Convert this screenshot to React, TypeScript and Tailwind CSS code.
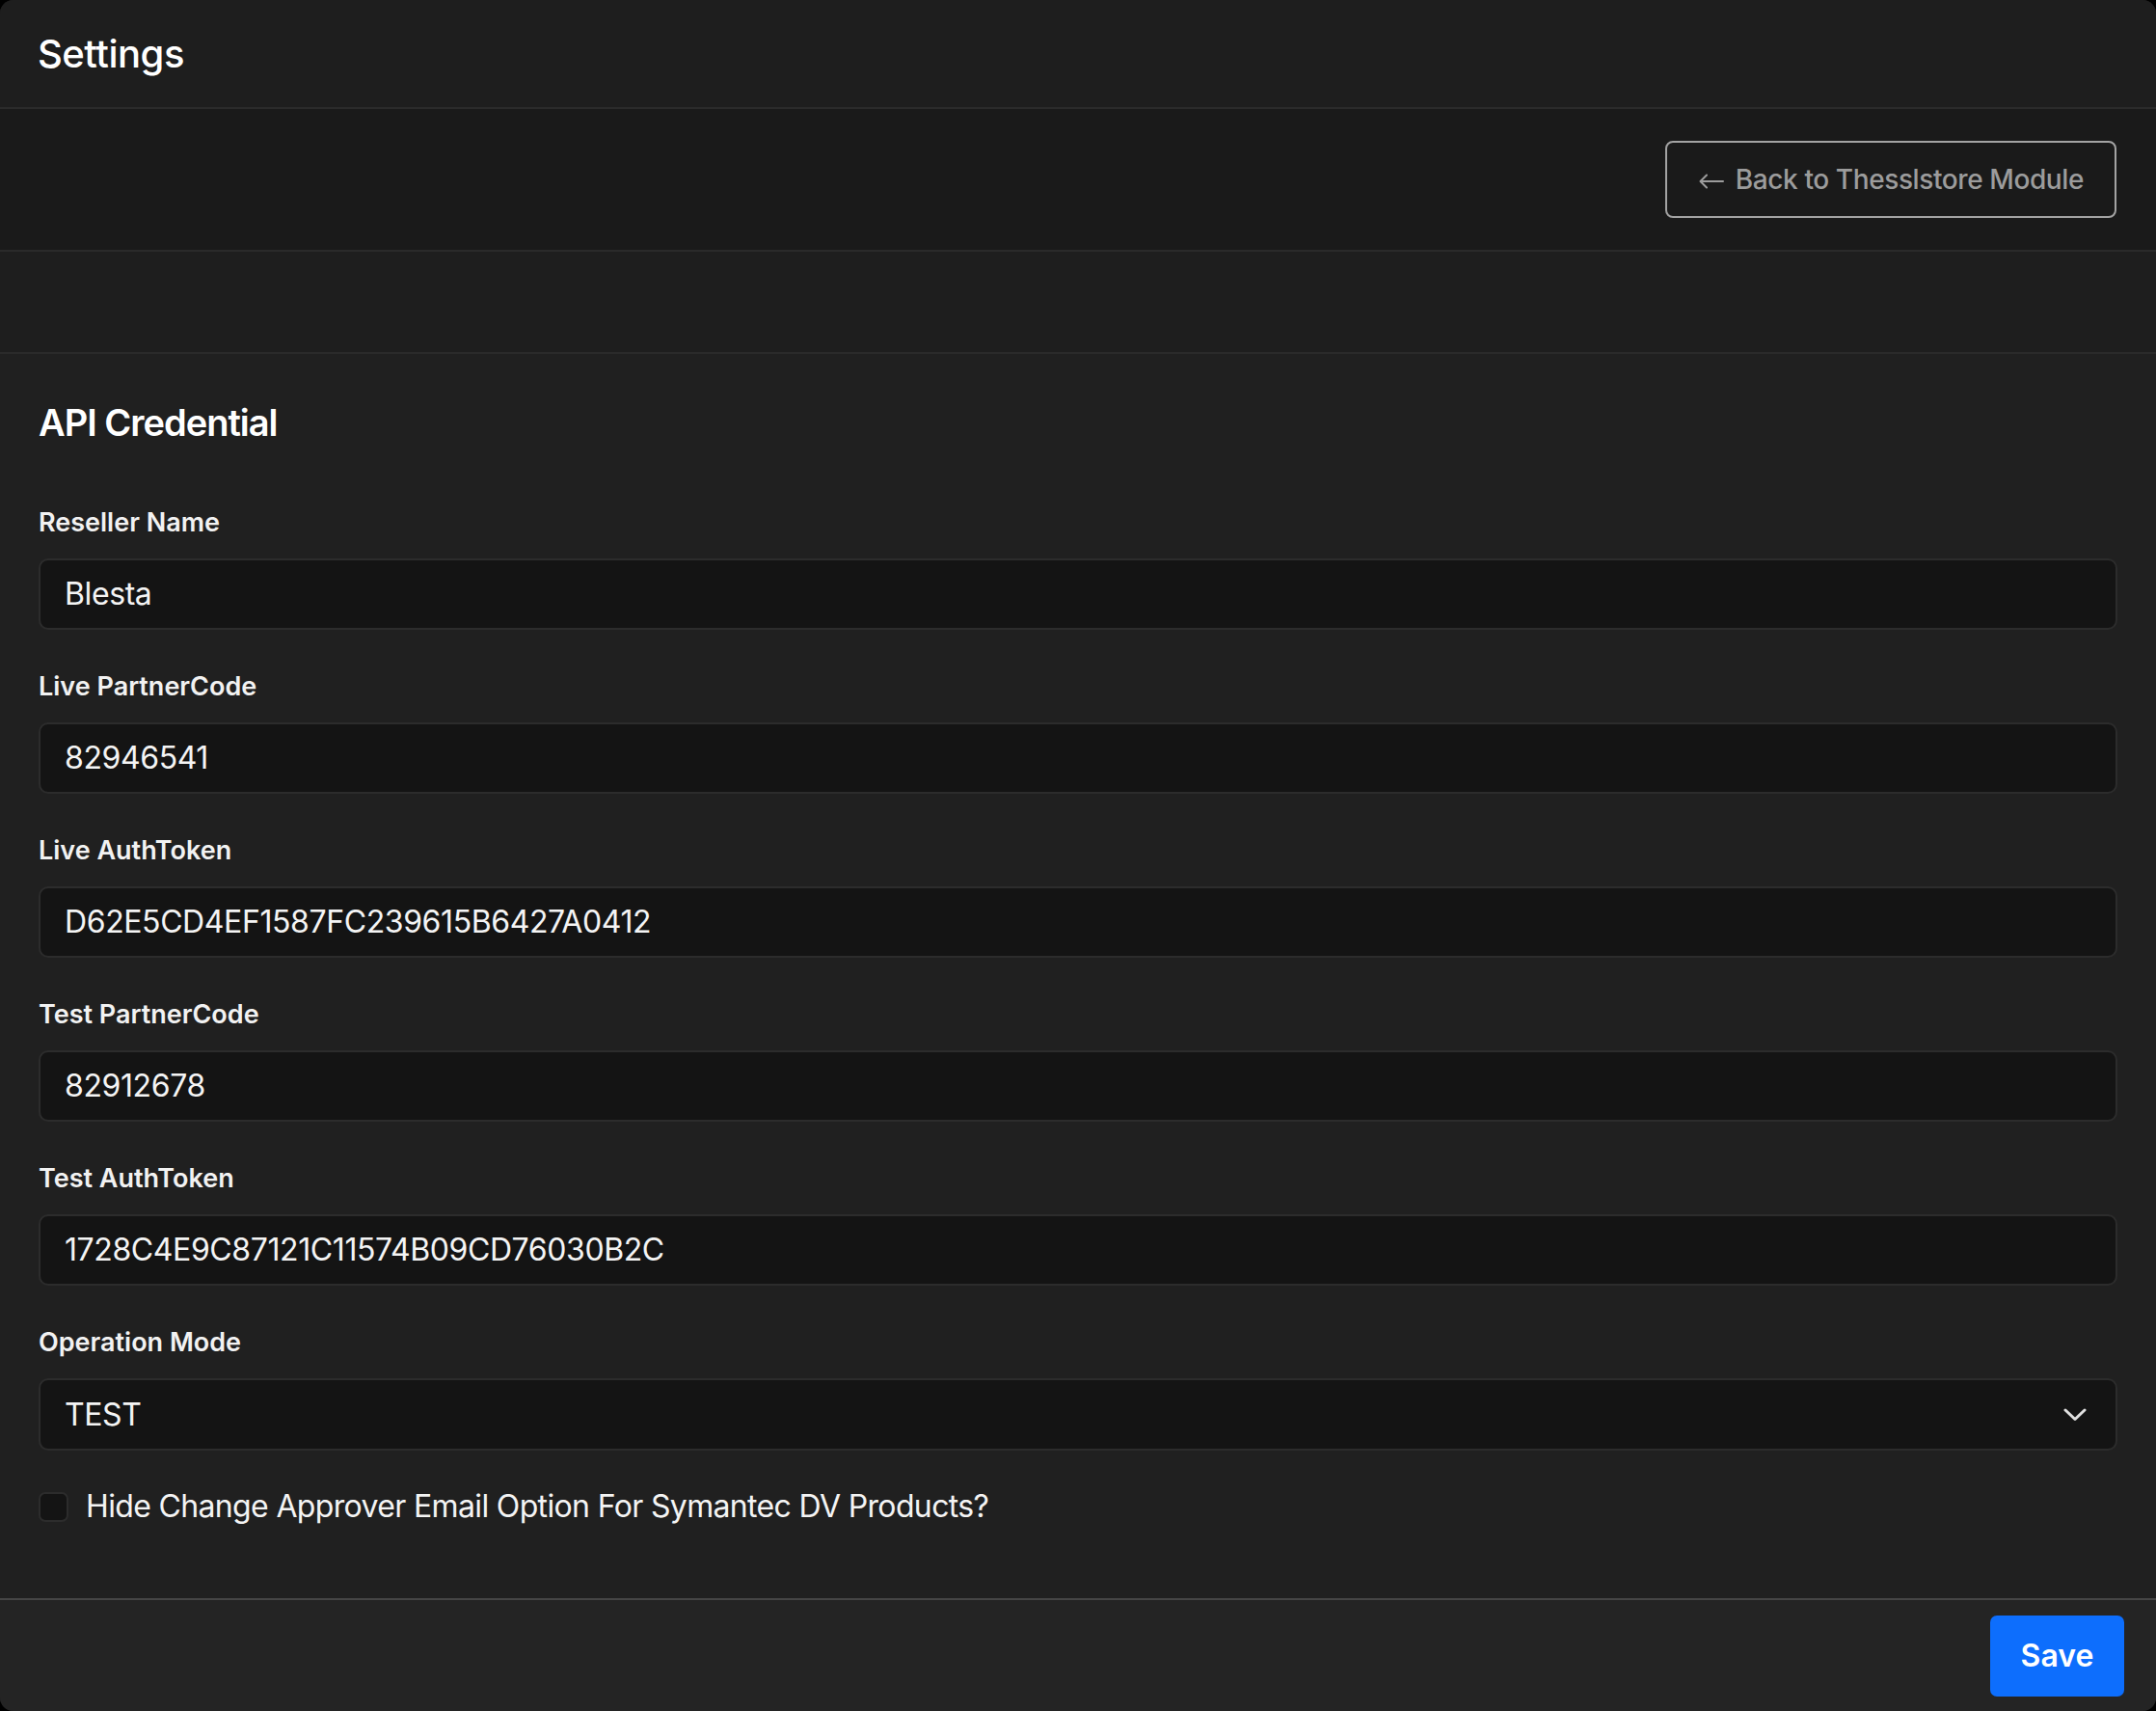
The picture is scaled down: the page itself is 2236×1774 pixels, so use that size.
import React from 'react';

const fields = [
  { label: 'Reseller Name', value: 'Blesta' },
  { label: 'Live PartnerCode', value: '82946541' },
  { label: 'Live AuthToken', value: 'D62E5CD4EF1587FC239615B6427A0412' },
  { label: 'Test PartnerCode', value: '82912678' },
  { label: 'Test AuthToken', value: '1728C4E9C87121C11574B09CD76030B2C' },
];

export default function App() {
  return (
    <div className="min-h-screen bg-black font-['Inter',sans-serif] text-white">
      <div className="flex h-[1774px] flex-col overflow-hidden rounded-[14px] bg-[#1f1f1f]">
        {/* header */}
        <div className="flex h-[113px] shrink-0 items-center border-b-2 border-[#2b2b2b] bg-[#1e1e1e] px-[39px]">
          <h1 className="text-[40px] font-medium leading-none tracking-[-0.5px]">Settings</h1>
        </div>

        {/* toolbar */}
        <div className="flex h-[148px] shrink-0 items-center justify-end border-b-2 border-[#2a2a2a] bg-[#1a1a1a] px-[41px]">
          <button className="flex h-[80px] items-center gap-[12px] rounded-[8px] border-2 border-[#a3a3a3] pl-[33px] pr-[32px] text-[28px] font-medium tracking-[-0.4px] text-[#9c9c9c]">
            <svg width="26" height="16" viewBox="0 0 26 16" fill="none" stroke="#9c9c9c" strokeWidth="2" strokeLinecap="round" strokeLinejoin="round" className="mt-[4px]">
              <path d="M25 8H2" />
              <path d="M8 1.5L1.5 8L8 14.5" />
            </svg>
            Back to Thesslstore Module
          </button>
        </div>

        <div className="h-[106px] shrink-0 border-b-2 border-[#2a2a2a] bg-[#1e1e1e]" />

        {/* form */}
        <div className="flex-1 bg-[#202020] px-[40px] pt-[48px]">
          <h2 className="mb-[64px] text-[38px] font-semibold leading-[46px] tracking-[-1px]">API Credential</h2>

          {fields.map((f) => (
            <div key={f.label} className="mb-[42px]">
              <div className="mb-[20px] text-[27px] font-semibold leading-[34px] text-[#f2f2f2]">{f.label}</div>
              <div className="flex h-[74px] items-center rounded-[10px] border-2 border-[#2c2c2c] bg-[#141414] px-[25px] text-[32px] tracking-[-0.4px] text-[#f4f4f4]">
                {f.value}
              </div>
            </div>
          ))}

          <div className="mb-[42px]">
            <div className="mb-[20px] text-[27px] font-semibold leading-[34px] text-[#f2f2f2]">Operation Mode</div>
            <div className="flex h-[75px] items-center justify-between rounded-[10px] border-2 border-[#2c2c2c] bg-[#141414] pl-[25px] pr-[30px] text-[32px] tracking-[-0.4px] text-[#f4f4f4]">
              <span>TEST</span>
              <svg width="24" height="14" viewBox="0 0 24 14" fill="none" stroke="#e0e0e0" strokeWidth="3" strokeLinecap="round" strokeLinejoin="round">
                <path d="M2 2L12 11.5L22 2" />
              </svg>
            </div>
          </div>

          <label className="flex items-center gap-[18px]">
            <span className="h-[31px] w-[31px] shrink-0 rounded-[7px] border-2 border-[#2c2c2c] bg-[#141414]" />
            <span className="text-[32px] leading-none tracking-[-0.65px] text-[#f4f4f4]">Hide Change Approver Email Option For Symantec DV Products?</span>
          </label>
        </div>

        {/* footer */}
        <div className="flex h-[117px] shrink-0 items-center justify-end border-t-2 border-[#454545] bg-[#242424] pr-[33px]">
          <button className="h-[84px] w-[139px] rounded-[7px] bg-[#0d6efd] text-[32px] font-semibold text-white">Save</button>
        </div>
      </div>
    </div>
  );
}
